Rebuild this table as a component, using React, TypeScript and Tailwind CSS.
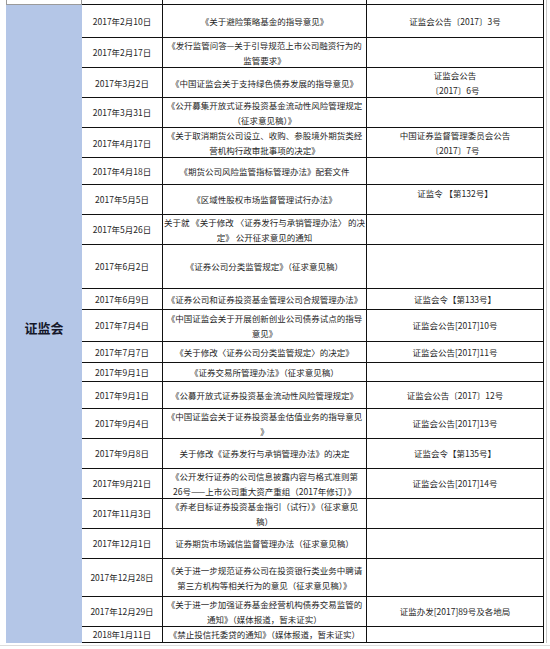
type Row = {
  d: string;
  h: string;
  t: string[];
  n?: string[];
  nTop?: boolean;
};

const rows: Row[] = [
  { d: "2017年2月10日", h: "h-[33px]", t: ["《关于避险策略基金的指导意见》"], n: ["证监会公告〔2017〕3号"] },
  { d: "2017年2月17日", h: "h-[30px]", t: ["《发行监管问答—关于引导规范上市公司融资行为的", "监管要求》"] },
  { d: "2017年3月2日", h: "h-[30px]", t: ["《中国证监会关于支持绿色债券发展的指导意见》"], n: ["证监会公告", "〔2017〕6号"] },
  { d: "2017年3月31日", h: "h-[30px]", t: ["《公开募集开放式证券投资基金流动性风险管理规定", "（征求意见稿）》"] },
  {
    d: "2017年4月17日",
    h: "h-[30px]",
    t: ["《关于取消期货公司设立、收购、参股境外期货类经", "营机构行政审批事项的决定》"],
    n: ["中国证券监督管理委员会公告", "〔2017〕7号"],
  },
  { d: "2017年4月18日", h: "h-[27px]", t: ["《期货公司风险监管指标管理办法》配套文件"] },
  { d: "2017年5月5日", h: "h-[30px]", t: ["《区域性股权市场监督管理试行办法》"], n: ["证监令 【第132号】"], nTop: true },
  { d: "2017年5月26日", h: "h-[30px]", t: ["关于就 《关于修改 〈证券发行与承销管理办法〉 的决", "定》 公开征求意见的通知"] },
  { d: "2017年6月2日", h: "h-[44px]", t: ["《证券公司分类监管规定》（征求意见稿）"] },
  { d: "2017年6月9日", h: "h-[21px]", t: ["《证券公司和证券投资基金管理公司合规管理办法》"], n: ["证监会令【第133号】"] },
  {
    d: "2017年7月4日",
    h: "h-[32px]",
    t: ["《中国证监会关于开展创新创业公司债券试点的指导", "意见》"],
    n: ["证监会公告[2017]10号"],
  },
  { d: "2017年7月7日", h: "h-[21px]", t: ["《关于修改〈证券公司分类监管规定〉的决定》"], n: ["证监会公告[2017]11号"] },
  { d: "2017年9月1日", h: "h-[19px]", t: ["《证券交易所管理办法》（征求意见稿）"] },
  { d: "2017年9月1日", h: "h-[27px]", t: ["《公募开放式证券投资基金流动性风险管理规定》"], n: ["证监会公告〔2017〕12号"] },
  {
    d: "2017年9月4日",
    h: "h-[30px]",
    t: ["《中国证监会关于证券投资基金估值业务的指导意见", "》"],
    n: ["证监会公告[2017]13号"],
  },
  { d: "2017年9月8日", h: "h-[30px]", t: ["关于修改《证券发行与承销管理办法》的决定"], n: ["证监会令【第135号】"] },
  {
    d: "2017年9月21日",
    h: "h-[30px]",
    t: ["《公开发行证券的公司信息披露内容与格式准则第", "26号——上市公司重大资产重组（2017年修订）》"],
    n: ["证监会公告[2017]14号"],
  },
  { d: "2017年11月3日", h: "h-[30px]", t: ["《养老目标证券投资基金指引（试行）》（征求意见", "稿）"] },
  { d: "2017年12月1日", h: "h-[30px]", t: ["证券期货市场诚信监督管理办法（征求意见稿）"] },
  {
    d: "2017年12月28日",
    h: "h-[38px]",
    t: ["《关于进一步规范证券公司在投资银行类业务中聘请", "第三方机构等相关行为的意见（征求意见稿）》"],
  },
  {
    d: "2017年12月29日",
    h: "h-[30px]",
    t: ["《关于进一步加强证券基金经营机构债券交易监管的", "通知》（媒体报道，暂未证实）"],
    n: ["证监办发[2017]89号及各地局"],
  },
  { d: "2018年1月11日", h: "h-[16px]", t: ["《禁止投信托委贷的通知》（媒体报道，暂未证实）"] },
];

function Lines({ items }: { items: string[] }) {
  return (
    <div className="flex flex-col items-center leading-[15px]">
      {items.map((s, i) => (
        <span key={i} className="whitespace-nowrap">
          {s}
        </span>
      ))}
    </div>
  );
}

export default function App() {
  return (
    <div className="flex h-[649px] w-[550px] flex-col overflow-hidden bg-white font-['Noto_Sans_CJK_SC',sans-serif] text-[8.5px] text-[#262626]">
      <div className="ml-[6px] flex w-[541px] flex-col border-r border-[#c8c8c8] pr-[2px]">
        {/* tail of the row above */}
        <div className="grid h-[5px] grid-cols-[76px_80px_205px_177px]">
          <div className="border-x border-b border-[#9a9a9a]" />
          <div className="border-b border-[#111]" />
          <div className="border-x border-b border-[#111]" />
          <div className="border-r border-b border-[#111]" />
        </div>

        <div className="flex">
          <div className="flex w-[76px] items-center justify-center bg-[#b4c6e7] pt-[8px]">
            <span className="text-[13px] font-bold text-[#15172a]">证监会</span>
          </div>
          <div className="flex flex-col">
            {rows.map((r, i) => (
              <div
                key={i}
                className={`grid grid-cols-[80px_205px_177px] overflow-hidden border-b border-[#111] ${r.h}`}
              >
                <div className="flex items-center justify-center whitespace-nowrap">{r.d}</div>
                <div className="flex items-center justify-center overflow-hidden border-x border-[#111]">
                  <Lines items={r.t} />
                </div>
                <div
                  className={`flex justify-center border-r border-[#111] ${
                    r.nTop ? "items-start pt-[1px]" : "items-center"
                  }`}
                >
                  {r.n && <Lines items={r.n} />}
                </div>
              </div>
            ))}
          </div>
        </div>
      </div>
      <div className="mt-[2px] h-[1px] w-full bg-[#dcdcdc]" />
    </div>
  );
}
